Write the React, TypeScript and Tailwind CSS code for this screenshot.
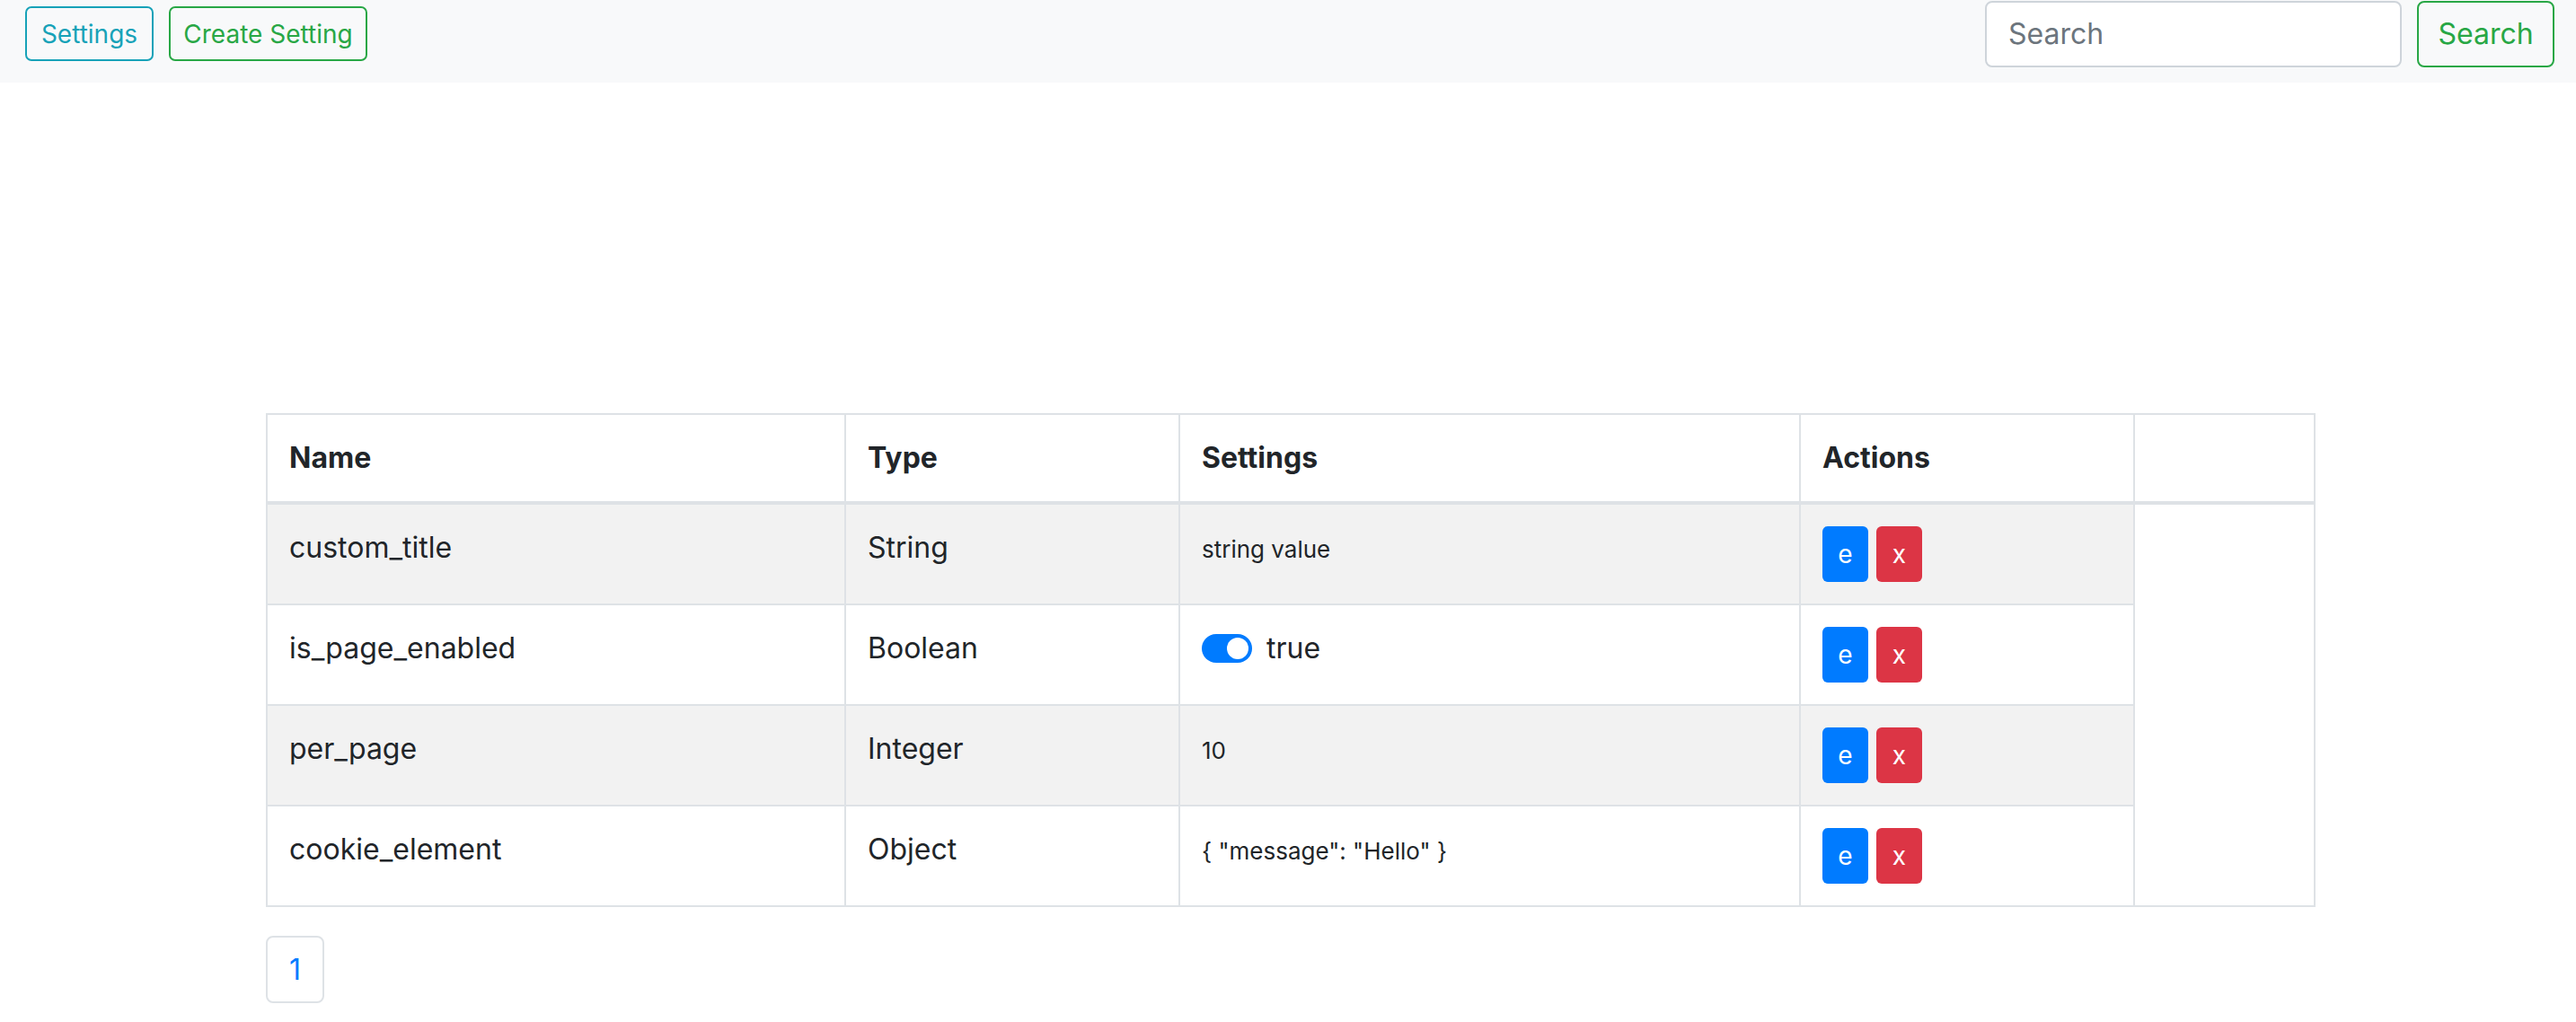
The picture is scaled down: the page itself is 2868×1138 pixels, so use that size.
import React from "react";

const rows = [
  { name: "custom_title", type: "String", kind: "text", value: "string value" },
  { name: "is_page_enabled", type: "Boolean", kind: "bool", value: "true" },
  { name: "per_page", type: "Integer", kind: "text", value: "10" },
  { name: "cookie_element", type: "Object", kind: "text", value: '{ "message": "Hello" }' },
];

export default function App() {
  return (
    <div
      className="min-h-screen bg-white text-[#212529]"
      style={{ fontFamily: "Inter, 'Noto Sans', 'Liberation Sans', sans-serif" }}
    >
      <nav className="h-[92px] bg-[#f8f9fa] flex justify-between items-start pl-[28px] pr-[24px]">
        <div className="flex gap-[17px] pt-[7px]">
          <button className="w-[143px] h-[61px] border-2 border-[#17a2b8] rounded-[7px] text-[#17a2b8] text-[28px] leading-none flex items-center justify-center">
            Settings
          </button>
          <button className="w-[221px] h-[61px] border-2 border-[#28a745] rounded-[7px] text-[#28a745] text-[28px] leading-none flex items-center justify-center">
            Create Setting
          </button>
        </div>
        <div className="flex gap-[17px] pt-[1px]">
          <div className="w-[464px] h-[74px] bg-white border-2 border-[#ced4da] rounded-[8px] pl-[24px] flex items-center text-[32px] text-[#6c757d]">
            Search
          </div>
          <button className="w-[153px] h-[74px] border-2 border-[#28a745] rounded-[8px] text-[#28a745] text-[32px] leading-none flex items-center justify-center">
            Search
          </button>
        </div>
      </nav>

      <div className="w-[2280px] ml-[296px] mt-[368px]">
        <table className="w-[2280px] table-fixed border-collapse border-2 border-[#dee2e6] text-[32px] leading-[48px]">
          <colgroup>
            <col className="w-[644px]" />
            <col className="w-[372px]" />
            <col className="w-[691px]" />
            <col className="w-[372px]" />
            <col className="w-[201px]" />
          </colgroup>
          <thead>
            <tr>
              {["Name", "Type", "Settings", "Actions", ""].map((h, i) => (
                <th
                  key={i}
                  className="border-2 border-b-4 border-[#dee2e6] p-[24px] text-left align-bottom font-bold"
                >
                  {h}
                </th>
              ))}
            </tr>
          </thead>
          <tbody>
            {rows.map((r, i) => {
              const bg = i % 2 === 0 ? "bg-[#f2f2f2]" : "bg-white";
              return (
                <tr key={r.name}>
                  <td className={`border-2 border-[#dee2e6] p-[24px] align-top ${bg}`}>{r.name}</td>
                  <td className={`border-2 border-[#dee2e6] p-[24px] align-top ${bg}`}>{r.type}</td>
                  <td className={`border-2 border-[#dee2e6] p-[24px] align-top ${bg}`}>
                    {r.kind === "bool" ? (
                      <>
                        <span className="relative inline-block align-top mt-[8px] mr-[16px] w-[56px] h-[32px] rounded-full bg-[#007bff]">
                          <span className="absolute right-[4px] top-[4px] w-[24px] h-[24px] rounded-full bg-white" />
                        </span>
                        <span>{r.value}</span>
                      </>
                    ) : (
                      <span className="text-[26px]">{r.value}</span>
                    )}
                  </td>
                  <td className={`border-2 border-[#dee2e6] p-[24px] align-top ${bg}`}>
                    <div className="flex gap-[9px]">
                      <button className="w-[51px] h-[62px] rounded-[6px] bg-[#007bff] text-white text-[28px] leading-none flex items-center justify-center">
                        e
                      </button>
                      <button className="w-[51px] h-[62px] rounded-[6px] bg-[#dc3545] text-white text-[28px] leading-none flex items-center justify-center">
                        x
                      </button>
                    </div>
                  </td>
                </tr>
              );
            })}
          </tbody>
        </table>

        <div className="mt-[32px] flex">
          <div className="w-[65px] h-[75px] border-2 border-[#dee2e6] rounded-[8px] flex items-center justify-center text-[32px] text-[#007bff]">
            1
          </div>
        </div>
      </div>
    </div>
  );
}
